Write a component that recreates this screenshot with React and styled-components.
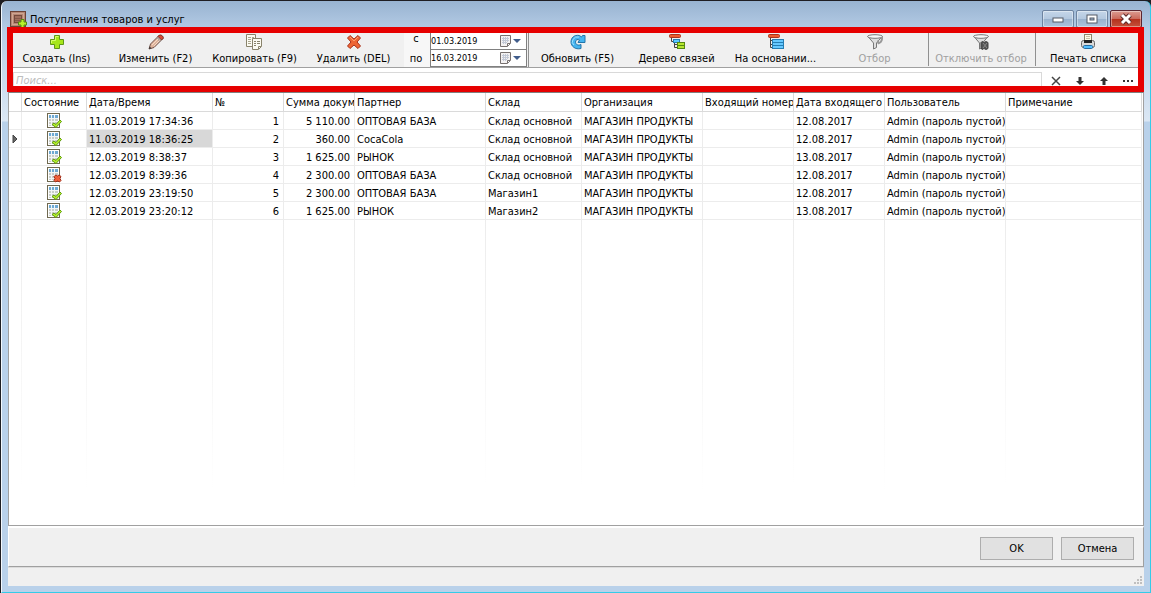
import { useState } from "react";
import styled, { createGlobalStyle } from "styled-components";

const columns = [
    { key: "mark", title: "", width: 13 },
    { key: "status", title: "Состояние", width: 65 },
    { key: "date", title: "Дата/Время", width: 126 },
    { key: "number", title: "№", width: 71, right: true },
    { key: "sum", title: "Сумма документа", width: 71, right: true },
    { key: "partner", title: "Партнер", width: 131 },
    { key: "store", title: "Склад", width: 96 },
    { key: "company", title: "Организация", width: 121 },
    { key: "inNumber", title: "Входящий номер", width: 91 },
    { key: "inDate", title: "Дата входящего", width: 91 },
    { key: "user", title: "Пользователь", width: 121 },
    { key: "note", title: "Примечание" },
];

const documents = [
    { number: 1, date: "11.03.2019 17:34:36", sum: "5 110.00", partner: "ОПТОВАЯ БАЗА", store: "Склад основной", inDate: "12.08.2017", done: true },
    { number: 2, date: "11.03.2019 18:36:25", sum: "360.00", partner: "CocaCola", store: "Склад основной", inDate: "12.08.2017", done: true },
    { number: 3, date: "12.03.2019 8:38:37", sum: "1 625.00", partner: "РЫНОК", store: "Склад основной", inDate: "13.08.2017", done: true },
    { number: 4, date: "12.03.2019 8:39:36", sum: "2 300.00", partner: "ОПТОВАЯ БАЗА", store: "Склад основной", inDate: "12.08.2017", done: false },
    { number: 5, date: "12.03.2019 23:19:50", sum: "2 300.00", partner: "ОПТОВАЯ БАЗА", store: "Магазин1", inDate: "12.08.2017", done: true },
    { number: 6, date: "12.03.2019 23:20:12", sum: "1 625.00", partner: "РЫНОК", store: "Магазин2", inDate: "13.08.2017", done: true },
].map(doc => ({ ...doc, company: "МАГАЗИН ПРОДУКТЫ", user: "Admin (пароль пустой)" }));

export default function App() {
    const [selected, setSelected] = useState(2);
    const [search, setSearch] = useState("");
    const [from, setFrom] = useState("01.03.2019");
    const [to, setTo] = useState("16.03.2019");

    function renderCell(doc, column) {
        if (column.key === "mark") return doc.number === selected ? <RowArrow /> : null;
        if (column.key === "status") return <StatusIcon done={doc.done} />;
        return doc[column.key];
    }

    return (
        <Desktop>
            <GlobalStyle />
            <Window>
                <TitleBar>
                    <BoxIcon />
                    <Title>Поступления товаров и услуг</Title>
                    <WindowButtons>
                        <WindowButton aria-label="Свернуть">
                            <svg width="12" height="12"><rect x="1" y="5" width="10" height="4" fill="#fff" stroke="#545a66" /></svg>
                        </WindowButton>
                        <WindowButton aria-label="Развернуть">
                            <svg width="12" height="12">
                                <rect x="1" y="2" width="10" height="8" fill="#fff" stroke="#545a66" />
                                <rect x="4" y="5" width="4" height="2" fill="#9fb6d0" stroke="#545a66" />
                            </svg>
                        </WindowButton>
                        <WindowButton $close aria-label="Закрыть">
                            <svg width="14" height="12">
                                <path d="M3 2L11 10M11 2L3 10" stroke="#5c2a2a" strokeWidth="5" />
                                <path d="M3 2L11 10M11 2L3 10" stroke="#fff" strokeWidth="3" />
                            </svg>
                        </WindowButton>
                    </WindowButtons>
                </TitleBar>
                <Tools>
                    <ToolBar>
                        <ToolButton><PlusIcon />Создать (Ins)</ToolButton>
                        <ToolButton><PencilIcon />Изменить (F2)</ToolButton>
                        <ToolButton><CopyIcon />Копировать (F9)</ToolButton>
                        <ToolButton><CrossIcon />Удалить (DEL)</ToolButton>
                        <Period>
                            <label htmlFor="from">с</label>
                            <DateField>
                                <input id="from" value={from} onChange={e => setFrom(e.target.value)} />
                                <button aria-label="Выбрать дату начала"><CalendarIcon /></button>
                            </DateField>
                            <label htmlFor="to">по</label>
                            <DateField>
                                <input id="to" value={to} onChange={e => setTo(e.target.value)} />
                                <button aria-label="Выбрать дату конца"><CalendarIcon /></button>
                            </DateField>
                        </Period>
                        <ToolButton><RefreshIcon />Обновить (F5)</ToolButton>
                        <ToolButton><TreeIcon />Дерево связей</ToolButton>
                        <ToolButton><BasedIcon />На основании...</ToolButton>
                        <ToolButton disabled><FilterIcon />Отбор</ToolButton>
                        <WideButtons>
                            <ToolButton $wide disabled><FilterIcon off />Отключить отбор</ToolButton>
                            <ToolButton $wide><PrinterIcon />Печать списка</ToolButton>
                        </WideButtons>
                    </ToolBar>
                    <SearchRow>
                        <SearchInput
                            aria-label="Поиск"
                            placeholder="Поиск..."
                            value={search}
                            onChange={e => setSearch(e.target.value)}
                        />
                        <SearchButtons>
                            <SearchButton aria-label="Очистить" onClick={() => setSearch("")}>
                                <svg width="10" height="10"><path d="M1 1L9 9M9 1L1 9" stroke="#444" strokeWidth="1.500" /></svg>
                            </SearchButton>
                            <SearchButton aria-label="Найти ниже">
                                <svg width="10" height="10"><path d="M3.500 1h3v4H9L5 9L1 5h2.500z" fill="#333" /></svg>
                            </SearchButton>
                            <SearchButton aria-label="Найти выше">
                                <svg width="10" height="10"><path d="M3.500 9h3V5H9L5 1L1 5h2.500z" fill="#333" /></svg>
                            </SearchButton>
                            <SearchButton aria-label="Ещё">
                                <svg width="10" height="10"><path d="M0 4h2v2H0zM4 4h2v2H4zM8 4h2v2H8z" fill="#333" /></svg>
                            </SearchButton>
                        </SearchButtons>
                    </SearchRow>
                    <Highlight />
                </Tools>
                <List>
                    <Table>
                        <colgroup>
                            {columns.map(column => <col key={column.key} width={column.width} />)}
                        </colgroup>
                        <thead>
                            <tr>{columns.map(column => <th key={column.key}>{column.title}</th>)}</tr>
                        </thead>
                        <tbody>
                            {documents.map(doc =>
                                <tr key={doc.number} onClick={() => setSelected(doc.number)}>
                                    {columns.map(column =>
                                        <Cell
                                            key={column.key}
                                            $right={column.right}
                                            $icon={column.key === "status" || column.key === "mark"}
                                            $active={column.key === "date" && doc.number === selected}
                                        >
                                            {renderCell(doc, column)}
                                        </Cell>
                                    )}
                                </tr>
                            )}
                            <tr>{columns.map(column => <EmptyCell key={column.key} />)}</tr>
                        </tbody>
                    </Table>
                </List>
                <Actions>
                    <ActionButton>OK</ActionButton>
                    <ActionButton>Отмена</ActionButton>
                </Actions>
                <StatusBar>
                    <svg width="8" height="8"><path d="M6 0h2v2H6zM3 3h2v2H3zM6 3h2v2H6zM0 6h2v2H0zM3 6h2v2H3zM6 6h2v2H6z" fill="#bfbfbf" /></svg>
                </StatusBar>
            </Window>
        </Desktop>
    )
}

function BoxIcon() {
    return (
        <svg width="17" height="17" viewBox="0 0 17 17">
            <rect x=".5" y=".5" width="15" height="15" fill="#b58673" stroke="#6b4237" />
            <path d="M2 2.500h12M2 13.500h12M2.500 2v12M13.500 2v12" stroke="#cfa592" />
            <rect x="4.500" y="4.500" width="7" height="7" fill="#a06e5d" stroke="#754a3d" />
            <path d="M5 7.500h6M5 9.500h6" stroke="#87594a" />
            <path d="M11 8.500h3v2.500h2.500v3H14v2.500h-3V14H8.500v-3H11z" fill="#b8ee2c" stroke="#528a12" />
        </svg>
    )
}

function PlusIcon() {
    return (
        <svg width="16" height="16">
            <path d="M5.500 1.500h5v4h4v5h-4v4h-5v-4h-4v-5h4z" fill="#a6e61a" stroke="#5f9618" />
            <path d="M6.500 6.500v-4h3M2.500 9v-2.500h4" stroke="#d6ff6b" fill="none" />
        </svg>
    )
}

function PencilIcon() {
    return (
        <svg width="16" height="16">
            <path d="M1 15L2.500 10L11.500 1L15 4.500L6 13.500z" fill="#dfb49c" stroke="#6f5048" />
            <path d="M10 2.500L11.500 1Q13 .5 14.500 2T15 4.500L13.500 6z" fill="#d84a36" stroke="#7c3028" />
            <path d="M8.500 4L12 7.500M9.500 3L13 6.500" stroke="#9a9a9a" />
            <path d="M4 11L10 5M6 12L11.500 6.500" stroke="#f4d9c6" />
            <path d="M1 15l.7-2.500 1.800 1.800z" fill="#333" />
        </svg>
    )
}

function CopyIcon() {
    return (
        <svg width="17" height="16">
            <path d="M.5.5h9v12H.5z" fill="#fcfbf2" stroke="#89836b" />
            <path d="M2 3.500h3M6 3.500h2M2 5.500h3M6 5.500h2M2 7.500h3M2 9.500h3" stroke="#aaa68f" />
            <path d="M6.500 4.500h9v8l-3 3h-6z" fill="#fcfbf2" stroke="#89836b" />
            <path d="M12.500 15v-2.500H15M8 7.500h2M11 7.500h3M8 9.500h2M11 9.500h3M8 11.500h2" stroke="#89836b" fill="none" />
        </svg>
    )
}

function CrossIcon() {
    return (
        <svg width="16" height="16">
            <path d="M4 1.500L8 5L12 1.500L14.500 4L11 8L14.500 12L12 14.500L8 11L4 14.500L1.500 12L5 8L1.500 4z" fill="#ee6535" stroke="#a9311b" strokeLinejoin="round" />
            <path d="M4 3L8 7L12 3" stroke="#ff9d6c" fill="none" />
        </svg>
    )
}

function CalendarIcon() {
    return (
        <svg width="21" height="12">
            <path d="M.5.5h10v8l-3 3h-7z" fill="#f4f2f2" stroke="#77706f" />
            <path d="M7.500 11V8.500H10" stroke="#77706f" fill="#fff" />
            <path d="M2 3.500h7M2 5.500h7M2 7.500h5M3.500 2v7M5.500 2v7M7.500 2v5" stroke="#c3c9d6" />
            <path d="M13 4h8l-4 4z" fill="#415d8b" />
        </svg>
    )
}

function RefreshIcon() {
    return (
        <svg width="16" height="16">
            <path d="M9.500 1.500C4 .5 1 4 1 8s4 8 10 6.500V10.500C8 12 5.500 10.500 5.500 8S8 5 9.500 6L8 8.500h7V1.500h-2.500L11.500 3z" fill="#45b4ef" stroke="#2475a9" strokeLinejoin="round" />
            <path d="M9 3Q5 2 3 5.500T4 11" stroke="#a3e3ff" fill="none" />
        </svg>
    )
}

function TreeIcon() {
    return (
        <svg width="16" height="16">
            <path d="M2.500 4v3.500H5M5.500 8v5.500H9M5.500 10.500H9" stroke="#444" fill="none" />
            <rect x=".5" y=".5" width="11" height="3" rx="1" fill="#ef5a2e" stroke="#a8341d" />
            <rect x="4.500" y="5.500" width="6" height="3" fill="#5bcaff" stroke="#267eb3" />
            <rect x="8.500" y="8.500" width="7" height="6" fill="#b5e62d" stroke="#568812" />
            <path d="M9 11.500h6" stroke="#568812" />
        </svg>
    )
}

function BasedIcon() {
    return (
        <svg width="16" height="16">
            <path d="M2.500 4v9.500H5M2.500 6.500H5M2.500 10.500H5" stroke="#444" fill="none" />
            <rect x=".5" y=".5" width="11" height="3" rx="1" fill="#ef5a2e" stroke="#a8341d" />
            <rect x="4.500" y="5.500" width="11" height="9" fill="#65c8ff" stroke="#267eb3" />
            <path d="M5 8.500h10M5 11.500h10" stroke="#267eb3" />
        </svg>
    )
}

function FilterIcon({ off }) {
    return (
        <svg width="16" height="16">
            <path d="M1 2.500L6.500 9v6l3-1.500V9L15 2.500z" fill="#dedede" stroke="#777" />
            <ellipse cx="8" cy="2.500" rx="7.500" ry="1.800" fill="#f7f7f7" stroke="#777" />
            {off
                ? <path d="M9 7.500l2 1 2-1 2 1v6l-2 1-2-1-2 1-1-2v-5z" fill="#555" stroke="#444" />
                : <path d="M11 9.500Q15.500 8 15 3M11 9.500V6.500" stroke="#999" strokeWidth="2" fill="none" />}
            {off && <path d="M10 9L14 14M14 9L10 14" stroke="#8a8a8a" />}
        </svg>
    )
}

function PrinterIcon() {
    return (
        <svg width="16" height="16">
            <rect x="4.500" y=".5" width="7" height="6" fill="#fbfae8" stroke="#8c866d" />
            <path d="M6 2.500h4M6 4.500h4" stroke="#c8c2a6" />
            <rect x="1.500" y="6.500" width="13" height="7" rx="2" fill="#d9d9d9" stroke="#666" />
            <rect x="4" y="6" width="8" height="3" fill="#222" />
            <rect x="3.500" y="11.500" width="9" height="3" rx="1" fill="#54bfff" stroke="#246ba1" />
        </svg>
    )
}

function StatusIcon({ done }) {
    return (
        <svg width="16" height="17">
            <rect x="1.500" y="1.500" width="12" height="14" fill="#fff" stroke="#6f6950" />
            <rect x="3" y="3" width="9" height="11" fill="#c9cdc8" />
            <rect x="3" y="3" width="9" height="3" fill="#6ea9d3" />
            <path d="M3 6.500h9M3 9.500h9M3 12.500h9M5.500 3v11M8.500 3v11" stroke="#f2f5f5" />
            {done
                ? <path d="M6 12.500L8 11l2 1.500L14 8l1.500 1.500L10 15.500z" fill="#b6ef29" stroke="#5f9a12" />
                : <path d="M8.500 10l1.500-1 1.500 1L13 9l2 1.500-1 2 1 2-1.500 1.500-2-1-2 1L8 14.500l1-2-1-2z" fill="#f0603a" stroke="#a02c18" />}
        </svg>
    )
}

function RowArrow() {
    return <svg width="6" height="10"><path d="M1 1L5 5L1 9z" fill="#666" stroke="#444" /></svg>
}

const GlobalStyle = createGlobalStyle`
    * {
        box-sizing: border-box;
    }
    body {
        margin: 0;
    }
    body, button, input {
        font-family: "DejaVu Sans Condensed", "DejaVu Sans", sans-serif;
        font-size: 11px;
        color: #000;
    }
    svg {
        display: block;
        flex-shrink: 0;
    }
`

const Desktop = styled.div`
    min-height: 100vh;
    display: flex;
    padding: 1px 0 0 1px;
    background-color: #1e1d22;
`

const Window = styled.div`
    flex: 1;
    min-width: 0;
    display: flex;
    flex-direction: column;
    padding: 0 6px 6px 6px;
    border: solid #35cbe8;
    border-width: 0 1px 1px 0;
    border-left: 1px solid #f3f8fd;
    border-radius: 6px 6px 0 0;
    background: linear-gradient(#98b3d1, #b6cde6 30px, #dbe7f4 120px, #b9d1ea 121px);
`

const TitleBar = styled.header`
    height: 29px;
    display: flex;
    align-items: flex-end;
    padding: 0 2px 2px 2px;
`

const Title = styled.h1`
    flex: 1;
    margin: 0 0 0 3px;
    font-size: 11px;
    font-weight: 400;
    line-height: 16px;
`

const WindowButtons = styled.div`
    display: flex;
    gap: 2px;
`

const WindowButton = styled.button`
    width: 32px;
    height: 18px;
    display: flex;
    align-items: center;
    justify-content: center;
    padding: 0;
    border: 1px solid ${props => props.$close ? "#5b2530" : "#6d83a0"};
    border-radius: 2px;
    box-shadow: inset 0 0 0 1px rgba(255, 255, 255, 0.4);
    background: ${props => props.$close
        ? "linear-gradient(#dc9c92, #cb6a5c 48%, #b5301c 50%, #c4523c)"
        : "linear-gradient(#c5d6e9, #b3c8df 48%, #98b1cd 50%, #adc3dc)"};
`

const Tools = styled.div`
    position: relative;
    background-color: #fff;
`

const Highlight = styled.div`
    position: absolute;
    inset: -3px 0 0 -1px;
    border: 6px solid #e60000;
    pointer-events: none;
`

const ToolBar = styled.div`
    height: 38px;
    display: flex;
    background-color: #f0f0f0;
    border-bottom: 1px solid #a0a0a0;
`

const ToolButton = styled.button`
    flex: 0 0 ${props => props.$wide ? "107px" : "99px"};
    height: 36px;
    display: flex;
    flex-direction: column;
    align-items: center;
    gap: 1px;
    padding: 4px 2px 0 0;
    border: none;
    border-left: ${props => props.$wide ? "1px solid #909090" : "none"};
    background: none;
    line-height: 16px;
    white-space: nowrap;
    color: ${props => props.disabled ? "#a0a0a0" : "#000"};
`

const WideButtons = styled.div`
    display: flex;
    margin-left: auto;
    padding-right: 2px;
`

const Period = styled.div`
    flex: 0 0 125px;
    display: grid;
    grid-template-columns: 26px minmax(0, 1fr);
    grid-template-rows: 20px 17px;
    padding-right: 1px;
    border-right: 1px solid #909090;
    label {
        line-height: 18px;
        padding-right: 2px;
        text-align: center;
        background-color: #f7f7f7;
    }
`

const DateField = styled.div`
    display: flex;
    align-items: flex-end;
    padding-bottom: 2px;
    background-color: #fff;
    border: solid #808080;
    border-width: 0 1px 1px 1px;
    input {
        flex: 1;
        min-width: 0;
        height: 12px;
        padding: 0;
        border: none;
        outline: 0;
        font-size: 9px;
    }
    button {
        padding: 0 5px 0 0;
        border: none;
        background: none;
    }
`

const SearchRow = styled.div`
    height: 24px;
    display: flex;
    padding: 4px 4px 0 5px;
`

const SearchInput = styled.input`
    flex: 1;
    min-width: 0;
    height: 20px;
    padding: 0 0 4px 2px;
    border: 1px solid #d9d9d9;
    outline: 0;
    font-style: italic;
    &::placeholder {
        color: #bdbdbd;
        opacity: 1;
    }
`

const SearchButtons = styled.div`
    display: flex;
    padding-left: 2px;
`

const SearchButton = styled.button`
    width: 24px;
    height: 18px;
    display: flex;
    align-items: center;
    justify-content: center;
    padding: 0;
    border: none;
    background: none;
`

const List = styled.div`
    flex: 1;
    padding-right: 1px;
    background-color: #fff;
    border: 1px solid #a0a0a0;
    border-top: 1px solid #808080;
`

const Table = styled.table`
    width: 100%;
    table-layout: fixed;
    border-collapse: separate;
    border-spacing: 0;
    th {
        height: 19px;
        padding: 2px 0 0 2px;
        font-weight: 400;
        line-height: 16px;
        text-align: left;
        white-space: nowrap;
        overflow: hidden;
        border-right: 1px solid #dadada;
        border-bottom: 1px solid #dadada;
    }
`

const Cell = styled.td`
    height: 18px;
    padding: ${props => props.$icon ? "0" : props.$right ? "3px 4px 0 0" : "3px 0 0 2px"};
    line-height: 14px;
    text-align: ${props => props.$right ? "right" : "left"};
    white-space: nowrap;
    overflow: hidden;
    border-right: 1px solid #ececec;
    border-bottom: 1px solid #ececec;
    background-color: ${props => props.$active ? "#d8d8d8" : "#fff"};
    svg {
        margin: 0 auto;
    }
`

const EmptyCell = styled.td`
    height: 270px;
    padding: 0;
    background: linear-gradient(#ececec, #fff) right / 1px 100% no-repeat;
`

const Actions = styled.footer`
    height: 41px;
    display: flex;
    align-items: center;
    justify-content: flex-end;
    gap: 8px;
    padding: 2px 9px 0 0;
    background-color: #f0f0f0;
    border: solid #a0a0a0;
    border-width: 0 1px 1px 0;
    border-top: 2px solid #fff;
    border-left: 1px solid #fff;
`

const ActionButton = styled.button`
    width: 73px;
    height: 23px;
    padding: 0;
    background-color: #e1e1e1;
    border: 1px solid #adadad;
`

const StatusBar = styled.div`
    height: 19px;
    display: flex;
    align-items: flex-end;
    justify-content: flex-end;
    padding: 0 2px 2px 0;
    background-color: #f0f0f0;
    border-top: 1px solid #dcdcdc;
`
